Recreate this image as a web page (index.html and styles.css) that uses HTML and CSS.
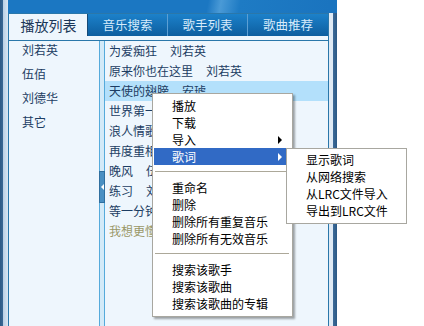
FILE: index.html
```html
<!DOCTYPE html>
<html lang="zh-CN">
<head>
    <meta charset="UTF-8">
    <title>播放列表</title>
    <link rel="stylesheet" href="styles.css">
</head>
<body>
    <div class="screen">
        <div class="window">
            <div class="frame frame-left"></div>
            <div class="main">
                <div class="titlebar"></div>
                <div class="panel">
                    <!-- Tabs -->
                    <div class="tabs">
                        <div class="tab active">播放列表</div>
                        <div class="tab first">音乐搜索</div>
                        <div class="tab">歌手列表</div>
                        <div class="tab last">歌曲推荐</div>
                    </div>
                    <div class="tab-strip"></div>

                    <div class="content">
                        <ul class="artists">
                            <li>刘若英</li>
                            <li>伍佰</li>
                            <li>刘德华</li>
                            <li>其它</li>
                        </ul>
                        <div class="splitter">
                            <span class="handle"></span>
                        </div>
                        <ul class="songs">
                            <li><span>为爱痴狂</span><span>刘若英</span></li>
                            <li><span>原来你也在这里</span><span>刘若英</span></li>
                            <li class="selected"><span>天使的翅膀</span><span>安琥</span></li>
                            <li><span>世界第一等</span><span>刘德华</span></li>
                            <li><span>浪人情歌</span><span>伍佰</span></li>
                            <li><span>再度重相逢</span><span>伍佰</span></li>
                            <li><span>晚风</span><span>伍佰</span></li>
                            <li><span>练习</span><span>刘德华</span></li>
                            <li><span>等一分钟</span><span>徐誉滕</span></li>
                            <li class="missing"><span>我想更懂你</span><span>潘玮柏</span></li>
                        </ul>
                    </div>
                </div>
            </div>
            <div class="frame frame-right"></div>
        </div>

        <!-- Context menu -->
        <ul class="menu">
            <li>播放</li>
            <li>下载</li>
            <li class="has-sub">导入</li>
            <li class="has-sub hover">歌词</li>
            <li class="sep"></li>
            <li>重命名</li>
            <li>删除</li>
            <li>删除所有重复音乐</li>
            <li>删除所有无效音乐</li>
            <li class="sep"></li>
            <li>搜索该歌手</li>
            <li>搜索该歌曲</li>
            <li>搜索该歌曲的专辑</li>
        </ul>

        <ul class="menu submenu">
            <li>显示歌词</li>
            <li>从网络搜索</li>
            <li>从LRC文件导入</li>
            <li>导出到LRC文件</li>
        </ul>
    </div>
</body>
</html>
```

FILE: styles.css
```css
body {
    margin: 0;
    background: #fff;
    font-family: "Noto Sans CJK SC", "DejaVu Sans", sans-serif;
    font-size: 12px;
}

.screen {
    position: relative;
    width: 424px;
    height: 326px;
    overflow: hidden;
}

.window {
    display: flex;
    width: 337px;
    height: 326px;
}

.frame {
    width: 8px;
    flex: none;
}

.frame-left {
    background: linear-gradient(to right, #2d5a86 0, #3a6894 3px, #b8cfe5 3px, #d9e6f2 8px);
}

.frame-right {
    background: linear-gradient(to bottom, #1a74bf 0, #1a74bf 13px, transparent 13px),
                linear-gradient(to right, #dfeaf5 0, #dfeaf5 4px, #3d6b99 4px, #2b5884 8px);
}

.main {
    flex: 1;
    display: flex;
    flex-direction: column;
}

.titlebar {
    height: 13px;
    background: linear-gradient(100deg, #1b77c2 0, #1b77c2 62%, #4a9ad6 66%, #1e7bc4 72%, #1a74bf 100%);
}

.panel {
    flex: 1;
    display: flex;
    flex-direction: column;
    background: #eef6fd;
    border: 1px solid #2a77aa;
    border-bottom: none;
}

.tabs {
    display: flex;
    height: 22px;
}

.tab {
    width: 79px;
    line-height: 22px;
    text-align: center;
    color: #d6ebfb;
    font-size: 12.5px;
    background: linear-gradient(#1c81ca, #0d5e9f);
    border-left: 1px solid #5c9fd4;
}

.tab.first {
    border-left-color: #164a77;
}

.tab.last {
    flex: 1;
}

.tab.active {
    width: 77px;
    border-left: none;
    background: #eef6fd;
    color: #1b3658;
    font-size: 14px;
    padding-left: 1px;
}

.tab-strip {
    height: 4px;
    border-bottom: 1px solid #2a77aa;
}

.content {
    flex: 1;
    display: flex;
}

ul {
    list-style: none;
    margin: 0;
    padding: 0;
}

.artists {
    width: 90px;
    color: #1c3d63;
}

.artists li {
    line-height: 18px;
    margin-bottom: 6px;
    padding-left: 13px;
}

.splitter {
    width: 4px;
    background: #d3eaf8;
    border-left: 1px solid #55aadb;
    border-right: 1px solid #55aadb;
    display: flex;
    flex-direction: column;
}

.handle {
    margin-top: 130px;
    margin-left: -1px;
    width: 4px;
    height: 30px;
    background: #4a90c3;
    border: 1px solid #2f6f9f;
    display: flex;
    align-items: center;
    justify-content: center;
}

.handle::before {
    content: "";
    border-right: 3px solid #fff;
    border-top: 3px solid transparent;
    border-bottom: 3px solid transparent;
}

.songs {
    flex: 1;
    color: #1c3d63;
}

.songs li {
    height: 20px;
    line-height: 20px;
    padding-left: 4px;
    display: flex;
    gap: 13px;
    white-space: nowrap;
}

.songs li.selected {
    background: #b3e0fb;
}

.songs li.missing {
    color: #9a9868;
}

/* context menu */
.menu {
    position: absolute;
    left: 152px;
    top: 93px;
    width: 136px;
    padding: 3px 2px 4px 1px;
    background: #fff;
    border: 1px solid #a8a7a0;
    box-shadow: 2px 2px 2px rgba(0, 0, 0, 0.35);
    color: #000;
}

.menu li {
    position: relative;
    height: 17px;
    line-height: 17px;
    padding-left: 18px;
    white-space: nowrap;
}

.menu li.hover {
    background: #316ac5;
    color: #fff;
}

.menu li.has-sub::after {
    content: "";
    position: absolute;
    right: 8px;
    top: 5px;
    border-left: 4px solid #000;
    border-top: 4px solid transparent;
    border-bottom: 4px solid transparent;
}

.menu li.hover::after {
    border-left-color: #fff;
}

.menu li.sep {
    height: 0;
    margin: 6px 1px;
    padding: 0;
    border-top: 1px solid #aca899;
    border-bottom: 1px solid #fff;
}

.submenu {
    left: 286px;
    top: 148px;
    width: 116px;
    padding: 2px 2px 4px 1px;
    box-shadow: none;
}
```
